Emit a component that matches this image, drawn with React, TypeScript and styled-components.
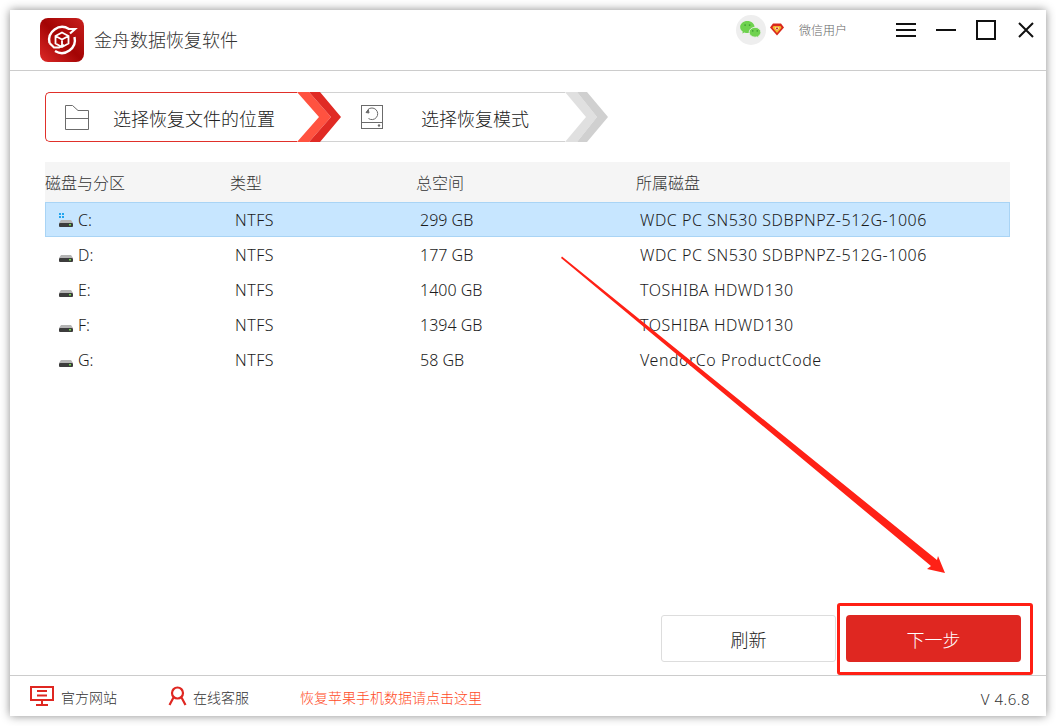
import React from "react";
import styled, { createGlobalStyle } from "styled-components";

const GlobalStyle = createGlobalStyle`
  html, body {
    margin: 0;
    padding: 0;
    background: #ffffff;
  }
  * {
    box-sizing: border-box;
  }
`;

const disks = [
  { name: "C:", type: "NTFS", size: "299 GB", disk: "WDC PC SN530 SDBPNPZ-512G-1006", system: true },
  { name: "D:", type: "NTFS", size: "177 GB", disk: "WDC PC SN530 SDBPNPZ-512G-1006" },
  { name: "E:", type: "NTFS", size: "1400 GB", disk: "TOSHIBA HDWD130" },
  { name: "F:", type: "NTFS", size: "1394 GB", disk: "TOSHIBA HDWD130" },
  { name: "G:", type: "NTFS", size: "58 GB", disk: "VendorCo ProductCode" }
];

const Page = styled.div`
  position: relative;
  width: 1056px;
  height: 726px;
  padding: 10px;
  overflow: hidden;
  font-family: "Noto Sans", "Noto Sans CJK SC", sans-serif;
`;

const Window = styled.div`
  display: flex;
  flex-direction: column;
  width: 1036px;
  height: 706px;
  background: #ffffff;
  box-shadow: 0 0 9px rgba(0, 0, 0, 0.45);
`;

const Header = styled.header`
  display: flex;
  align-items: center;
  flex: none;
  height: 61px;
  padding: 0 12px 1px 30px;
  border-bottom: 1px solid #cccccc;
`;

const Title = styled.span`
  margin-left: 10px;
  margin-top: -2px;
  font-size: 18px;
  font-weight: 300;
  color: #333333;
`;

const UserArea = styled.div`
  display: flex;
  align-items: center;
  align-self: flex-start;
  height: 30px;
  margin-left: auto;
  margin-top: 5px;
`;

const Avatar = styled.div`
  display: flex;
  align-items: center;
  justify-content: center;
  width: 30px;
  height: 30px;
  border-radius: 50%;
  background: #eeeeee;
`;

const Gem = styled.svg`
  margin-left: 4px;
  margin-top: -1px;
`;

const UserName = styled.span`
  margin-left: 15px;
  font-size: 12px;
  font-weight: 300;
  color: #666666;
`;

const WindowIcon = styled.svg<{ $left: number }>`
  display: block;
  margin-left: ${(p) => p.$left}px;
`;

const Main = styled.main`
  display: flex;
  flex-direction: column;
  flex: 1;
  min-height: 0;
  padding: 21px 25px 13px 35px;
`;

const Stepper = styled.div`
  display: flex;
  flex: none;
  height: 50px;
`;

const Step = styled.div<{ $active?: boolean }>`
  display: flex;
  align-items: center;
  height: 50px;
  border-style: solid;
  border-color: ${(p) => (p.$active ? "#e0302a" : "#d2d2d2")};
  border-width: ${(p) => (p.$active ? "1px 0 1px 1px" : "1px 0")};
  border-radius: ${(p) => (p.$active ? "5px 0 0 5px" : "0")};
  width: ${(p) => (p.$active ? "252px" : "245px")};
  margin-left: ${(p) => (p.$active ? "0" : "-21px")};
  padding-left: ${(p) => (p.$active ? "19px" : "41px")};
`;

const StepLabel = styled.span<{ $gap: number }>`
  margin-left: ${(p) => p.$gap}px;
  margin-top: 2px;
  font-size: 18px;
  font-weight: 300;
  color: #222222;
`;

const Chevron = styled.svg`
  position: relative;
  z-index: 1;
  flex: none;
`;

const Table = styled.div`
  width: 965px;
  margin-top: 20px;
`;

const TableHead = styled.div`
  display: grid;
  grid-template-columns: 185px 186px 220px 1fr;
  align-items: center;
  height: 40px;
  background: #f5f5f5;
  font-size: 16px;
  font-weight: 300;
  color: #333333;
`;

const Row = styled.div<{ $selected?: boolean }>`
  display: grid;
  grid-template-columns: 185px 186px 220px 1fr;
  align-items: center;
  height: 35px;
  font-size: 16px;
  font-weight: 300;
  color: #1c1c1c;
  background: ${(p) => (p.$selected ? "#c7e6ff" : "transparent")};
  box-shadow: ${(p) => (p.$selected ? "inset 0 0 0 1px #a9d4f5" : "none")};
`;

const NameCell = styled.div`
  display: flex;
  align-items: center;
  padding-left: 13px;
`;

const DriveName = styled.span`
  margin-left: 4px;
`;

const Cell = styled.div`
  padding-left: 4px;
  white-space: nowrap;
`;

const TypeCell = styled(Cell)`
  padding-left: 5px;
  letter-spacing: 0.5px;
`;

const DiskCell = styled(Cell)`
  letter-spacing: 0.53px;
`;

const Actions = styled.div`
  display: flex;
  justify-content: flex-end;
  gap: 10px;
  margin-top: auto;
`;

const RefreshButton = styled.button`
  width: 175px;
  height: 47px;
  background: #ffffff;
  border: 1px solid #dddddd;
  border-radius: 3px;
  font-family: inherit;
  font-size: 18px;
  font-weight: 300;
  color: #222222;
`;

const NextWrap = styled.div`
  position: relative;
`;

const NextButton = styled.button`
  display: block;
  width: 175px;
  height: 47px;
  background: #df2721;
  border: none;
  border-radius: 4px;
  font-family: inherit;
  font-size: 18px;
  font-weight: 300;
  color: #ffffff;
`;

const Highlight = styled.div`
  position: absolute;
  top: -12px;
  left: -9px;
  right: -12px;
  bottom: -13px;
  border: 3px solid #ff1f14;
  border-radius: 3px;
  pointer-events: none;
`;

const Footer = styled.footer`
  display: flex;
  align-items: center;
  flex: none;
  height: 41px;
  padding: 0 16px 0 20px;
  border-top: 1px solid #cccccc;
  font-size: 14px;
  font-weight: 300;
  color: #333333;
`;

const FooterLink = styled.span<{ $left: number; $gap: number }>`
  display: flex;
  align-items: center;
  margin-left: ${(p) => p.$left}px;
  gap: ${(p) => p.$gap}px;
`;

const FooterText = styled.span`
  margin-top: 2px;
`;

const RecoverLink = styled(FooterText)`
  margin-left: 51px;
  color: #ff4a26;
`;

const Version = styled.span`
  margin-left: auto;
  margin-top: 5px;
  font-size: 15px;
  letter-spacing: 0.5px;
  color: #333333;
`;

const Annotation = styled.svg`
  position: absolute;
  top: 0;
  left: 0;
  pointer-events: none;
`;

const Logo = () => (
  <svg width="44" height="44" viewBox="0 0 44 44">
    <defs>
      <linearGradient id="logoBg" x1="1" y1="0" x2="0" y2="1">
        <stop offset="0" stopColor="#c8201e" />
        <stop offset="0.5" stopColor="#a30404" />
        <stop offset="1" stopColor="#dd2a28" />
      </linearGradient>
    </defs>
    <rect width="44" height="44" rx="8" fill="url(#logoBg)" />
    <path d="M29 11A13 13 0 0 0 9.500 25" fill="none" stroke="#fff" strokeWidth="2.400" />
    <path d="M15 33A13 13 0 0 0 34.500 19" fill="none" stroke="#fff" strokeWidth="2.400" />
    <path d="M9.500 25L14 29.500H19L24 27M28 11H35L30 15.500" fill="none" stroke="#fff" strokeWidth="2.200" />
    <path d="M22 14.500L28.500 18V25.500L22 29L15.500 25.500V18ZM15.500 18L22 21.500L28.500 18M22 21.500V29" fill="none" stroke="#fff" strokeWidth="1.800" />
  </svg>
);

const WeChat = () => (
  <svg width="21" height="18" viewBox="1 2 23 20">
    <path d="M9 2C4.600 2 1 5 1 8.700C1 10.800 2.200 12.700 4 13.900L3.300 16L5.800 14.800C6.800 15.200 7.900 15.400 9 15.400C13.400 15.400 17 12.400 17 8.700C17 5 13.400 2 9 2Z" fill="#6fd24f" />
    <path d="M17.500 9C13.900 9 11 11.500 11 14.500C11 17.500 13.900 20 17.500 20C18.300 20 19 19.900 19.700 19.600L22 21L21.400 18.700C23 17.700 24 16.200 24 14.500C24 11.500 21.100 9 17.500 9Z" fill="#6fd24f" stroke="#eeeeee" strokeWidth="1" />
    <circle cx="6.500" cy="6.500" r="1" fill="#3f9e33" />
    <circle cx="11.500" cy="6.500" r="1" fill="#3f9e33" />
    <circle cx="15" cy="13" r="0.900" fill="#3f9e33" />
    <circle cx="20" cy="13" r="0.900" fill="#3f9e33" />
  </svg>
);

const GemIcon = () => (
  <Gem width="14" height="13" viewBox="0 0 14 13">
    <path d="M3 0.500H11L14 4.500L7 12.500L0 4.500Z" fill="#d9281c" />
    <path d="M3.500 3H10.500L11.500 4.800L7 10L2.500 4.800Z" fill="#f4b52c" />
    <path d="M4.800 4.500H9.200L7 7.500Z" fill="#ffffff" />
    <circle cx="7" cy="5.600" r="1" fill="#c0271c" />
  </Gem>
);

const FolderIcon = () => (
  <svg width="24" height="25" viewBox="0 0 24 25" fill="none" stroke="#6b6b6b" strokeWidth="1">
    <path d="M0.500 24.500V0.500H7.500L13 5.500H23.500V24.500ZM0.500 13.500H23.500" />
  </svg>
);

const RestoreIcon = () => (
  <svg width="23" height="24" viewBox="0 0 23 24" fill="none" stroke="#6b6b6b" strokeWidth="1">
    <rect x="0.500" y="0.500" width="21" height="23" />
    <path d="M0.500 17.500H21.500" />
    <path d="M7 4.500A5.800 5.800 0 1 1 7.500 13.500" />
    <path d="M5 7.500L7.300 4.500L8 8Z" fill="#6b6b6b" />
    <circle cx="18" cy="20.500" r="1.200" fill="#6b6b6b" stroke="none" />
  </svg>
);

const DriveIcon = ({ system }: { system?: boolean }) => (
  <svg width="16" height="14" viewBox="0 0 16 14">
    {system && (
      <g fill="#22a5ee">
        <rect x="1" y="0" width="2" height="2" />
        <rect x="4" y="0" width="2" height="2" />
        <rect x="1" y="3" width="2" height="2" />
        <rect x="4" y="3" width="2" height="2" />
      </g>
    )}
    <path d="M3 7H13L15 10H1Z" fill="#b5b5b5" />
    <rect x="1" y="10" width="14" height="4" rx="1" fill="#3c3c3c" />
    <rect x="11" y="11" width="2" height="1.500" fill="#6fdc4a" />
  </svg>
);

const App: React.FC = () => {
  return (
    <Page>
      <GlobalStyle />
      <Window>
        <Header>
          <Logo />
          <Title>金舟数据恢复软件</Title>
          <UserArea>
            <Avatar>
              <WeChat />
            </Avatar>
            <GemIcon />
            <UserName>微信用户</UserName>
            <WindowIcon $left={49} width="20" height="16" viewBox="0 0 20 16" stroke="#111" strokeWidth="2">
              <path d="M0 2H20M0 8H20M0 14H20" />
            </WindowIcon>
            <WindowIcon $left={20} width="20" height="2" viewBox="0 0 20 2" stroke="#111" strokeWidth="2">
              <path d="M0 1H20" />
            </WindowIcon>
            <WindowIcon $left={20} width="20" height="20" viewBox="0 0 20 20" fill="none" stroke="#111" strokeWidth="2">
              <rect x="1" y="1" width="18" height="18" />
            </WindowIcon>
            <WindowIcon $left={22} width="16" height="16" viewBox="0 0 16 16" stroke="#111" strokeWidth="2">
              <path d="M1 1L15 15M15 1L1 15" />
            </WindowIcon>
          </UserArea>
        </Header>
        <Main>
          <Stepper>
            <Step $active>
              <FolderIcon />
              <StepLabel $gap={24}>选择恢复文件的位置</StepLabel>
            </Step>
            <Chevron width="44" height="50" viewBox="0 0 44 50">
              <path d="M0 0H12L34 25L12 50H0L22 25Z" fill="#ff5240" />
              <path d="M12 0H23L44 25L23 50H12L34 25Z" fill="#e02a24" />
            </Chevron>
            <Step>
              <RestoreIcon />
              <StepLabel $gap={37}>选择恢复模式</StepLabel>
            </Step>
            <Chevron width="43" height="50" viewBox="0 0 43 50">
              <path d="M0 0H12L32 25L12 50H0L21 25Z" fill="#e0e0e0" />
              <path d="M12 0H22L43 25L22 50H12L32 25Z" fill="#d0d0d0" />
            </Chevron>
          </Stepper>
          <Table>
            <TableHead>
              <span>磁盘与分区</span>
              <span>类型</span>
              <span>总空间</span>
              <span>所属磁盘</span>
            </TableHead>
            {disks.map((d) => (
              <Row key={d.name} $selected={d.system}>
                <NameCell>
                  <DriveIcon system={d.system} />
                  <DriveName>{d.name}</DriveName>
                </NameCell>
                <TypeCell>{d.type}</TypeCell>
                <Cell>{d.size}</Cell>
                <DiskCell>{d.disk}</DiskCell>
              </Row>
            ))}
          </Table>
          <Actions>
            <RefreshButton>刷新</RefreshButton>
            <NextWrap>
              <NextButton>下一步</NextButton>
              <Highlight />
            </NextWrap>
          </Actions>
        </Main>
        <Footer>
          <FooterLink $left={0} $gap={7}>
            <svg width="24" height="20" viewBox="0 0 24 20" fill="none" stroke="#df2721" strokeWidth="2">
              <rect x="1" y="1" width="22" height="13" />
              <path d="M7 5H17M7 9.500H17" />
              <path d="M12 14V18M6 19H18" />
            </svg>
            <FooterText>官方网站</FooterText>
          </FooterLink>
          <FooterLink $left={51} $gap={6}>
            <svg width="19" height="20" viewBox="0 0 19 20" fill="none" stroke="#df2721" strokeWidth="2.200">
              <circle cx="9.500" cy="7" r="5.500" />
              <path d="M5.500 11.500L1.500 19M13.500 11.500L17.500 19" />
            </svg>
            <FooterText>在线客服</FooterText>
          </FooterLink>
          <RecoverLink>恢复苹果手机数据请点击这里</RecoverLink>
          <Version>V 4.6.8</Version>
        </Footer>
      </Window>
      <Annotation width="1056" height="726" viewBox="0 0 1056 726">
        <path d="M562 256.500L937 560L938 556L945 573L927 569L931 566L561 258Z" fill="#ff2116" />
      </Annotation>
    </Page>
  );
};

export default App;
